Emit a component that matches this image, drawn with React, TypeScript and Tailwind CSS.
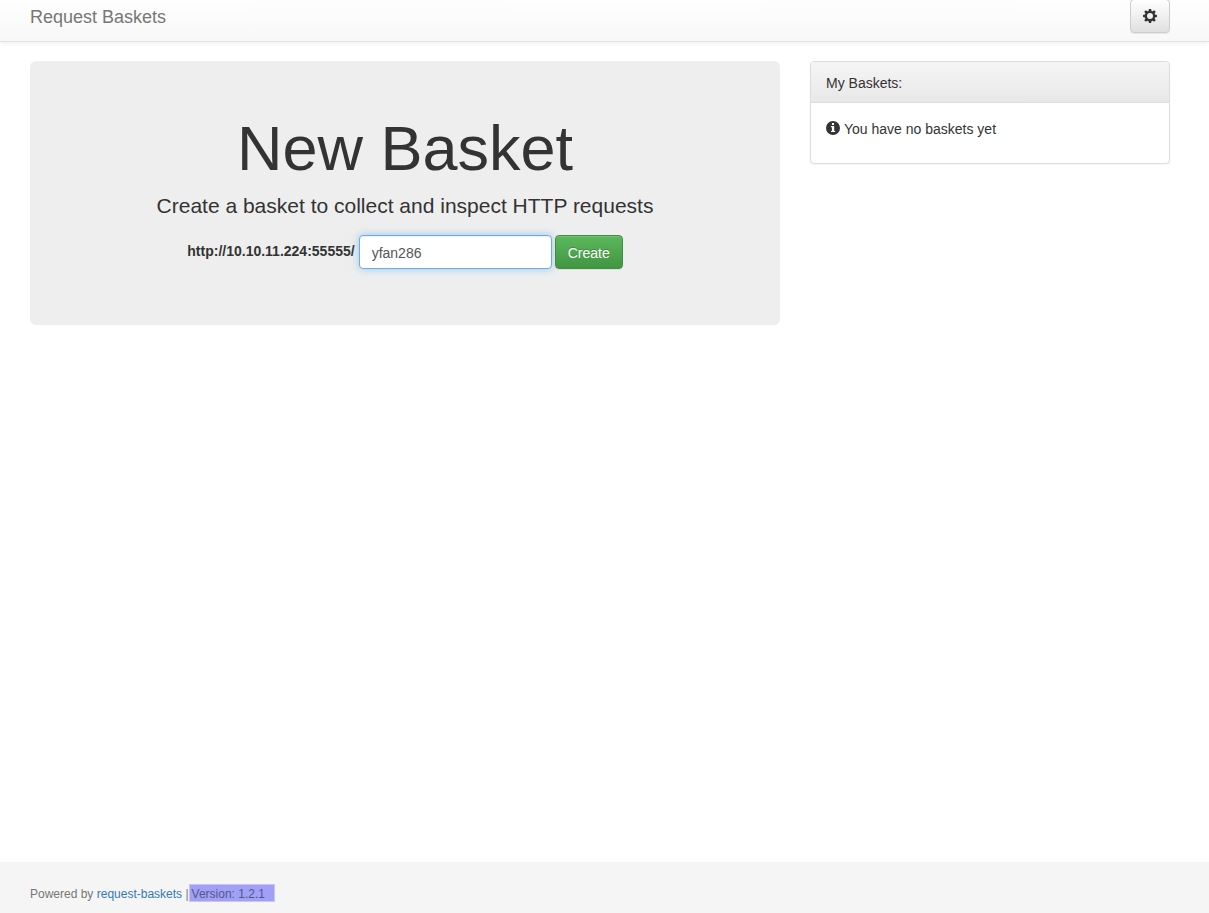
import { useState } from "react";

const toothAngles = [0, 45, 90, 135, 180, 225, 270, 315];

function CogIcon() {
  return (
    <svg viewBox="0 0 14 14" className="size-3.5 fill-current" aria-hidden="true">
      {toothAngles.map((angle) => (
        <path key={angle} d="M5.9 0h2.2l.6 3H5.3z" transform={`rotate(${angle} 7 7)`} />
      ))}
      <circle cx="7" cy="7" r="4.1" fill="none" stroke="currentColor" strokeWidth="2.2" />
    </svg>
  );
}

function InfoIcon() {
  return (
    <svg viewBox="0 0 14 14" className="size-3.5 shrink-0 fill-current" aria-hidden="true">
      <path
        fillRule="evenodd"
        d="M7 0a7 7 0 1 1 0 14A7 7 0 0 1 7 0zM6.2 2a.3.3 0 0 0-.3.3v1.4c0 .2.1.3.3.3h1.6c.2 0 .3-.1.3-.3V2.3a.3.3 0 0 0-.3-.3zM5.2 5a.3.3 0 0 0-.3.3v.6c0 .2.1.3.3.3h.7v3.7h-.7a.3.3 0 0 0-.3.3v.6c0 .2.1.3.3.3h3.8c.2 0 .3-.1.3-.3v-.6a.3.3 0 0 0-.3-.3h-.8V5.3a.3.3 0 0 0-.3-.3z"
      />
    </svg>
  );
}

export default function App() {
  const [basket, setBasket] = useState("yfan286");

  return (
    <div className="flex min-h-screen flex-col bg-white font-['Liberation_Sans',Arial,sans-serif] text-sm leading-5 text-[#333]">
      <header className="border-b border-[#e0e0e0] bg-linear-to-b from-[#fefefe] to-[#f8f8f8] pr-[9px] shadow-[0_1px_5px_rgba(0,0,0,0.075)]">
        <div className="mx-auto flex h-[41px] max-w-[1170px] items-start justify-between px-[15px]">
          <a href="#" className="pt-[7px] text-lg leading-5 text-[#777] [text-shadow:0_1px_0_rgba(255,255,255,0.25)]">
            Request Baskets
          </a>
          <button
            type="button"
            aria-label="Settings"
            className="-mt-px flex h-[34px] w-10 items-center justify-center rounded border border-[#ccc] bg-linear-to-b from-white to-[#e0e0e0] shadow-[inset_0_1px_0_rgba(255,255,255,0.15),0_1px_1px_rgba(0,0,0,0.075)]"
          >
            <CogIcon />
          </button>
        </div>
      </header>

      <main className="grow pr-[9px]">
        <div className="mx-auto grid max-w-[1170px] grid-cols-1 items-start gap-x-[30px] gap-y-5 px-[15px] pt-[19px] md:grid-cols-[25fr_12fr]">
          <section className="rounded-md bg-[#eee] px-[60px] pt-[52px] pb-14 text-center">
            <h1 className="text-[63px] leading-[70px]">New Basket</h1>
            <p className="mt-2 text-[21px] leading-[30px]">Create a basket to collect and inspect HTTP requests</p>
            <form className="mt-[14px] flex flex-wrap items-center justify-center" onSubmit={(e) => e.preventDefault()}>
              <label htmlFor="basket-name" className="mr-1 pb-0.5 font-bold">
                http://10.10.11.224:55555/
              </label>
              <input
                id="basket-name"
                type="text"
                value={basket}
                onChange={(e) => setBasket(e.target.value)}
                className="mr-[3px] h-[34px] w-[193px] rounded border border-[#66afe9] bg-white px-3 pt-0.5 text-[#555] shadow-[inset_0_1px_1px_rgba(0,0,0,0.075),0_0_8px_rgba(102,175,233,0.6)] outline-none"
              />
              <button
                type="submit"
                className="h-[34px] rounded border border-[#3e8f3e] bg-linear-to-b from-[#5cb85c] to-[#419641] px-3 pt-0.5 text-white shadow-[inset_0_1px_0_rgba(255,255,255,0.15),0_1px_1px_rgba(0,0,0,0.075)] [text-shadow:0_-1px_0_rgba(0,0,0,0.2)]"
              >
                Create
              </button>
            </form>
          </section>

          <aside className="rounded border border-[#ddd] bg-white shadow-[0_1px_2px_rgba(0,0,0,0.05)]">
            <h2 className="rounded-t-[3px] border-b border-[#ddd] bg-linear-to-b from-[#f5f5f5] to-[#e8e8e8] px-[15px] pt-[11px] pb-[9px]">
              My Baskets:
            </h2>
            <div className="flex items-start gap-1 px-[15px] pt-4 pb-6">
              <span className="pt-0.5">
                <InfoIcon />
              </span>
              <span>You have no baskets yet</span>
            </div>
          </aside>
        </div>
      </main>

      <footer className="bg-[#f5f5f5] pr-[9px]">
        <p className="mx-auto max-w-[1170px] px-[15px] pt-[22px] pb-[9px] text-xs leading-5 text-[#777]">
          Powered by{" "}
          <a href="#" className="text-[#337ab7]">
            request-baskets
          </a>{" "}
          |<span className="border border-[#c5c5f8] bg-[#a0a0f6] pt-0.5 pr-[9px] pl-0.5 text-[#55558c]">Version: 1.2.1</span>
        </p>
      </footer>
    </div>
  );
}
